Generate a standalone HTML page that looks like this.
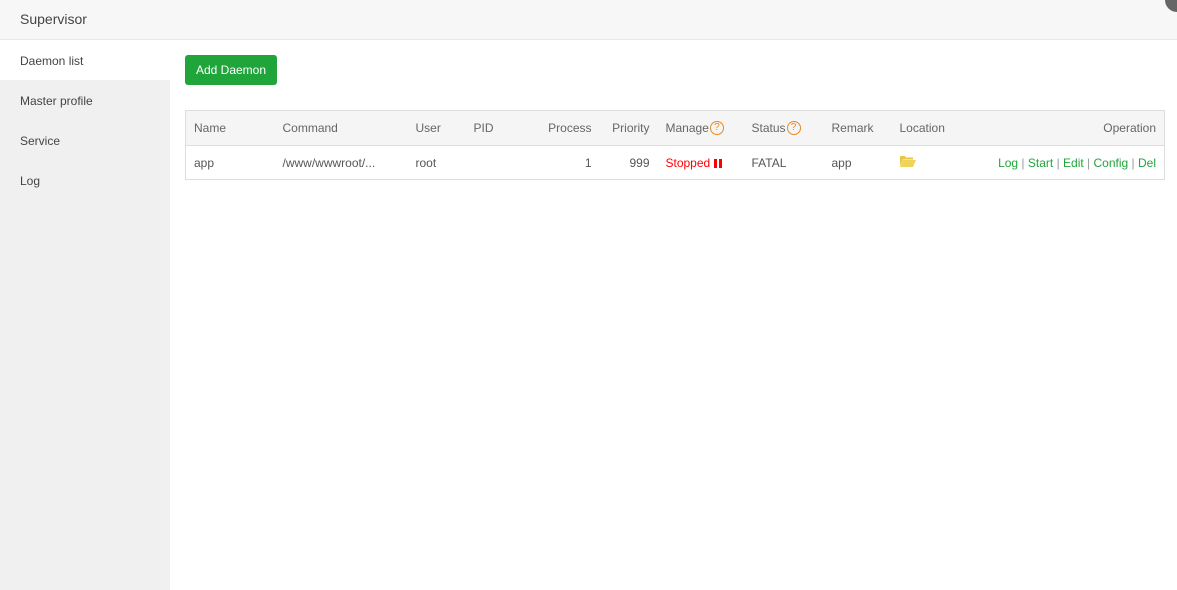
<!DOCTYPE html>
<html><head><style>
body{margin:0;width:1177px;height:590px;overflow:hidden;font-family:"Liberation Sans",sans-serif;font-size:12px;color:#555;background:#fff;position:relative}
.hd{position:absolute;left:0;top:0;width:1177px;height:39px;background:#f7f7f7;border-bottom:1px solid #e8e8e8;font-size:14px;color:#444;line-height:39px;text-indent:20px}
.x{position:absolute;left:1165px;top:-12px;width:24px;height:24px;border-radius:50%;background:#666}
.sb{position:absolute;left:0;top:40px;width:170px;height:550px;background:#f0f0f0}
.it{height:40px;line-height:42px;padding-left:20px;color:#444;font-size:12px}
.it.a{background:#fff}
.btn{position:absolute;left:185px;top:55px;width:92px;height:30px;background:#20a53a;color:#fff;border-radius:3px;text-align:center;line-height:31px;font-size:12px}
table{position:absolute;left:185px;top:110px;width:980px;border-collapse:collapse;border:1px solid #ddd;table-layout:fixed;font-size:12px}
th,td{height:34px;padding:0 8px;text-align:left;font-weight:normal;white-space:nowrap;overflow:visible}
td{height:33px}
th{background:#f5f5f5;border-bottom:1px solid #ddd;color:#666}
.r{text-align:right}
.q{display:inline-block;box-sizing:border-box;width:14px;height:14px;border:1px solid #f0861c;border-radius:50%;color:#f0861c;font-size:10px;line-height:12px;text-align:center;vertical-align:middle;margin-left:1px;margin-top:-2px}
.g{color:#20a53a}
</style></head><body>
<div class="hd">Supervisor</div><div class="x"></div>
<div class="sb"><div class="it a">Daemon list</div><div class="it">Master profile</div><div class="it">Service</div><div class="it">Log</div></div>
<div class="btn">Add Daemon</div>
<table><colgroup><col style="width:89px"><col style="width:133px"><col style="width:58px"><col style="width:65px"><col style="width:69px"><col style="width:58px"><col style="width:86px"><col style="width:80px"><col style="width:68px"><col style="width:80px"><col></colgroup>
<tr><th>Name</th><th>Command</th><th>User</th><th>PID</th><th class="r">Process</th><th class="r">Priority</th><th>Manage<span class="q">?</span></th><th>Status<span class="q">?</span></th><th>Remark</th><th>Location</th><th class="r">Operation</th></tr>
<tr><td>app</td><td>/www/wwwroot/...</td><td>root</td><td></td><td class="r">1</td><td class="r">999</td><td style="color:#f00">Stopped <b style="display:inline-block;height:9px;border-left:3px solid #f00;border-right:3px solid #f00;width:2px;vertical-align:-1px"></b></td><td>FATAL</td><td>app</td><td><svg width="16" height="12" viewBox="0 0 16 12"><path d="M0 1h5l1 1.5h7v2H3L0 11z" fill="#e8c64a"/><path d="M3 5h13l-3 7H0z" fill="#f0d35a"/></svg></td><td class="r g">Log <span style="color:#999">|</span> Start <span style="color:#999">|</span> Edit <span style="color:#999">|</span> Config <span style="color:#999">|</span> Del</td></tr></table>
</body></html>
